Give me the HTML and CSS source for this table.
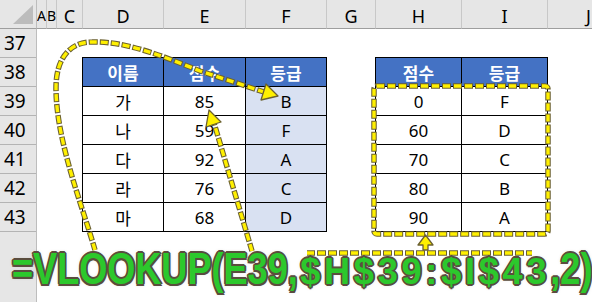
FILE: index.html
```html
<!DOCTYPE html>
<html lang="ko">
<head>
<meta charset="utf-8">
<title>VLOOKUP</title>
<link rel="stylesheet" href="styles.css">
</head>
<body>
<div class="sheet">
  <div class="colbar">
    <div class="corner"><span class="tri"></span></div>
    <div class="ch ch-narrow">A</div>
    <div class="ch ch-narrow">B</div>
    <div class="ch">C</div>
    <div class="ch">D</div>
    <div class="ch">E</div>
    <div class="ch">F</div>
    <div class="ch">G</div>
    <div class="ch">H</div>
    <div class="ch">I</div>
    <div class="ch ch-last">J</div>
  </div>
  <div class="body">
    <div class="rowbar">
      <div class="rh">37</div>
      <div class="rh">38</div>
      <div class="rh">39</div>
      <div class="rh">40</div>
      <div class="rh">41</div>
      <div class="rh">42</div>
      <div class="rh">43</div>
      <div class="rh rh-rest"></div>
    </div>
    <div class="cells">
      <div class="tbl tbl-left">
        <div class="th">이름</div><div class="th">점수</div><div class="th">등급</div>
        <div class="td">가</div><div class="td">85</div><div class="td hl">B</div>
        <div class="td">나</div><div class="td">59</div><div class="td hl">F</div>
        <div class="td">다</div><div class="td">92</div><div class="td hl">A</div>
        <div class="td">라</div><div class="td">76</div><div class="td hl">C</div>
        <div class="td">마</div><div class="td">68</div><div class="td hl">D</div>
      </div>
      <div class="tbl tbl-right">
        <div class="th">점수</div><div class="th">등급</div>
        <div class="td">0</div><div class="td">F</div>
        <div class="td">60</div><div class="td">D</div>
        <div class="td">70</div><div class="td">C</div>
        <div class="td">80</div><div class="td">B</div>
        <div class="td">90</div><div class="td">A</div>
      </div>
    </div>
  </div>

  <svg class="overlay" width="592" height="302" viewBox="0 0 592 302">
    <defs>
      <g id="lines">
        <path d="M95 250 C82 205 56 140 56 88 C56 58 70 42 92 42 C125 41 160 55 200 71 L264 92"/>
        <path d="M252 251 L214 123"/>
        <rect x="374" y="86" width="174" height="148" rx="3"/>
        <path d="M307 253 H532"/>
      </g>
    </defs>
    <use href="#lines" class="dash-outline"/>
    <use href="#lines" class="dash-fill"/>
    <g class="heads">
      <polygon points="278,96 266,84 261,100"/>
      <polygon points="209,110 221,122 206,127"/>
      <path d="M425.5 235 L433 245 L428 245 L428 250 L423 250 L423 245 L418 245 Z"/>
    </g>
  </svg>

  <div class="formula">=VLOOKUP(E39,<span class="range">$H$39:$I$43</span>,2)</div>
</div>
</body>
</html>
```

FILE: styles.css
```css
* { box-sizing: border-box; }
html, body { margin: 0; padding: 0; background: #fff; }
body { width: 592px; height: 302px; overflow: hidden; }

.sheet {
  position: relative;
  width: 592px;
  height: 302px;
  display: flex;
  flex-direction: column;
  font-family: "Noto Sans", "Noto Sans CJK KR", sans-serif;
  color: #000;
}

/* column header */
.colbar {
  display: grid;
  grid-template-columns: 37px 10px 10px 26px 81px 82px 81px 49px 86px 86px 1fr;
  height: 29px;
  flex: none;
}
.corner {
  background: #e6e6e6;
  border-right: 1px solid #bdbdbd;
  border-bottom: 1px solid #9e9e9e;
  display: flex;
  justify-content: flex-end;
  align-items: flex-end;
  padding: 0 3px 4px 0;
}
.tri {
  width: 20px;
  height: 19px;
  background: #bcbcbc;
  clip-path: polygon(100% 0, 100% 100%, 0 100%);
}
.ch {
  background: #e6e6e6;
  border-right: 1px solid #c8c8c8;
  border-bottom: 1px solid #9e9e9e;
  display: flex;
  justify-content: center;
  align-items: center;
  padding-top: 3px;
  font-size: 18px;
  overflow: hidden;
  white-space: nowrap;
}
.ch-narrow { font-size: 14px; }
.ch-last { border-right: none; justify-content: flex-start; padding-left: 38px; }

/* body */
.body {
  display: flex;
  flex: 1;
}
.rowbar {
  width: 37px;
  flex: none;
  display: flex;
  flex-direction: column;
  background: #e6e6e6;
  border-right: 1px solid #bdbdbd;
}
.rh {
  height: 29px;
  border-bottom: 1px solid #b4b4b4;
  font-size: 19px;
  line-height: 28px;
  padding-left: 4px;
}
.rh-rest { flex: 1; border-bottom: none; }

.cells {
  flex: 1;
  display: grid;
  grid-template-columns: 10px 10px 26px 81px 82px 81px 49px 86px 86px 1fr;
  grid-template-rows: 29px repeat(6, 29px) 1fr;
}

.tbl {
  display: grid;
  grid-row: 2 / 8;
  margin: -1px 0 0 -1px;
  border-left: 1px solid #000;
  border-top: 1px solid #000;
  grid-auto-rows: 29px;
  align-self: start;
}
.tbl-left {
  grid-column: 4 / 7;
  grid-template-columns: 81px 82px 81px;
}
.tbl-right {
  grid-column: 8 / 10;
  grid-template-columns: 86px 86px;
}
.th, .td {
  border-right: 1px solid #000;
  border-bottom: 1px solid #000;
  display: flex;
  justify-content: center;
  align-items: center;
  font-size: 17px;
}
.th {
  background: #4472c4;
  color: #fff;
  font-weight: 700;
}
.td.hl { background: #d9e1f2; }

/* overlays */
.overlay {
  position: absolute;
  left: 0;
  top: 0;
  pointer-events: none;
}
.dash-outline {
  fill: none;
  stroke: #6b6030;
  stroke-width: 5.5;
  stroke-dasharray: 9 2;
  stroke-dashoffset: 1;
}
.dash-fill {
  fill: none;
  stroke: #fff000;
  stroke-width: 3.4;
  stroke-dasharray: 7 4;
}
.heads {
  fill: #fff000;
  stroke: #6b6030;
  stroke-width: 1.3;
  stroke-linejoin: round;
}

.formula {
  position: absolute;
  left: 12px;
  top: 247px;
  font-family: "Liberation Sans", Arial, sans-serif;
  font-weight: 700;
  font-size: 44px;
  line-height: 1;
  white-space: nowrap;
  color: #2cc82c;
  transform: scaleX(0.82);
  transform-origin: 0 0;
  text-shadow:
    2px 0 #5a4d3e, -2px 0 #5a4d3e, 0 2px #5a4d3e, 0 -2px #5a4d3e,
    1.5px 1.5px #5a4d3e, -1.5px 1.5px #5a4d3e, 1.5px -1.5px #5a4d3e, -1.5px -1.5px #5a4d3e,
    0 0 4px rgba(90, 77, 62, 0.55);
}
.range {
  display: inline-block;
  letter-spacing: 4.6px;
  padding-left: 3px;
  transform: scaleY(0.85);
  transform-origin: 50% 85%;
}
```
